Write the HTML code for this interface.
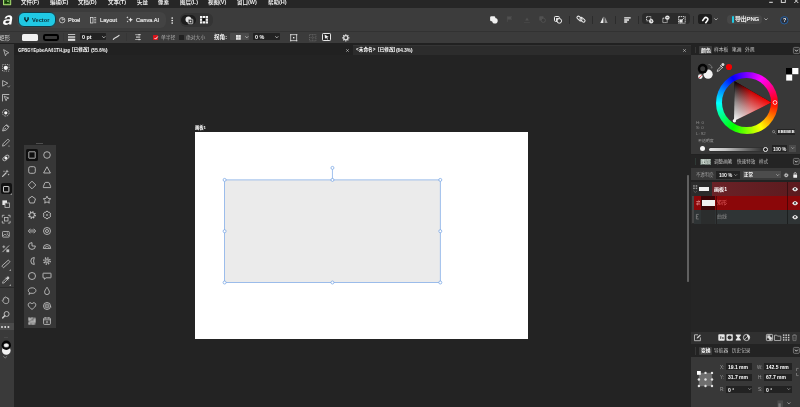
<!DOCTYPE html>
<html lang="zh-CN">
<head>
<meta charset="utf-8">
<title>Affinity</title>
<style>
*{margin:0;padding:0;box-sizing:border-box}
html,body{width:800px;height:407px;overflow:hidden;background:#232323}
body{position:relative;font-family:"Liberation Sans","Noto Sans CJK SC",sans-serif;color:#d0d0d0;font-size:5.5px;line-height:1}
.a{position:absolute}
.t{position:absolute;white-space:nowrap;line-height:1;will-change:transform}
.b{font-weight:bold;color:#fff}
svg{position:absolute;overflow:visible}
#menubar{left:0;top:0;width:800px;height:8.4px;background:#262626}
#toolbar{left:0;top:8.4px;width:800px;height:22.2px;background:#3c3c3c}
#ctx{left:0;top:30.6px;width:800px;height:12.3px;background:#3b3b3b;border-top:0.6px solid #323232}
#tabs{left:0;top:42.9px;width:800px;height:12.1px;background:#212121}
#tab2{left:353px;top:44.5px;width:337.8px;height:10.3px;background:#2c2c2c;border-top:.5px solid #353535}
#tools{left:0;top:44.2px;width:14px;height:363px;background:#3a3a3a}
#canvas{left:14px;top:55px;width:676.5px;height:352px;background:#232323}
#rp{left:690.8px;top:43.6px;width:109.2px;height:364px;background:#222}
</style>
</head>
<body>
<div class="a" id="canvas"></div>
<div class="a" id="menubar"></div>
<div class="a" id="toolbar"></div>
<div class="a" id="ctx"></div>
<div class="a" id="tabs"></div>
<div class="a" id="tab2"></div>
<div class="a" id="tools"></div>
<div class="a" id="rp"></div>
<svg style="left:2.5px;top:-3.2px" width="8.2" height="8.2" viewBox="0 0 8.2 8.2"><rect width="8.2" height="8.2" rx=".6" fill="#a9da72"/><rect x="1" y="1" width="6.200" height="6.200" fill="#2e661c"/><path d="M1.600 5.200l2-1.600v1h2v1.300h-2v1z" fill="#143008"/><circle cx="5" cy="4.300" r=".8" fill="#b8e68a"/></svg>
<div class="t" style="left:21px;top:0.3px;color:#ececec;font-weight:bold">文件(F)</div>
<div class="t" style="left:49.7px;top:0.3px;color:#ececec;font-weight:bold">编辑(E)</div>
<div class="t" style="left:78.3px;top:0.3px;color:#ececec;font-weight:bold">文档(D)</div>
<div class="t" style="left:107.7px;top:0.3px;color:#ececec;font-weight:bold">文本(T)</div>
<div class="t" style="left:136.5px;top:0.3px;color:#ececec;font-weight:bold">矢量</div>
<div class="t" style="left:158px;top:0.3px;color:#ececec;font-weight:bold">像素</div>
<div class="t" style="left:180px;top:0.3px;color:#ececec;font-weight:bold">图层(L)</div>
<div class="t" style="left:208px;top:0.3px;color:#ececec;font-weight:bold">视图(V)</div>
<div class="t" style="left:237px;top:0.3px;color:#ececec;font-weight:bold">窗口(W)</div>
<div class="t" style="left:268px;top:0.3px;color:#ececec;font-weight:bold">帮助(H)</div>
<svg style="left:768px;top:0" width="32" height="6" viewBox="0 0 32 6"><path d="M1.2 2.3h3.6" stroke="#e8e8e8" stroke-width="1"/><rect x="13.3" y="-1" width="4" height="3.4" fill="none" stroke="#e8e8e8" stroke-width=".9"/><path d="M26.3 -1l4 4M30.3 -1l-4 4" stroke="#e8e8e8" stroke-width=".9"/></svg>

<div class="a" style="left:16.5px;top:11.6px;width:149.3px;height:16.4px;border-radius:6px;background:#434343"></div>
<svg style="left:3.9px;top:14.8px" width="9" height="10.2" viewBox="0 0 9 10.2"><path transform="skewX(-9)" d="M1 3.4C1.6 1.2 3.4.3 5.2.3 7.6.3 8.8 1.6 8.8 3.6V9.6H6.6V8.6C6 9.5 4.9 10 3.6 10 1.6 10 .2 8.9 .2 7.2.2 5.2 1.8 4.3 4.4 4.3H6.5V3.7C6.5 2.6 5.9 2.1 4.9 2.1 4 2.1 3.4 2.5 3.1 3.4ZM6.5 5.8H4.7C3.3 5.8 2.5 6.2 2.5 7.1 2.5 7.8 3.1 8.3 4.1 8.3 5.5 8.3 6.5 7.4 6.5 6.2Z" fill="#fff"/></svg>
<div class="a" style="left:18.4px;top:12.4px;width:37.6px;height:14.8px;border-radius:6px;background:#20c9e4;border:.8px solid #123d47"></div>
<svg style="left:23.5px;top:16.9px" width="5" height="5.4" viewBox="0 0 5 5.4"><path d="M.9.300v2.100L2.500 4.400 4.100 2.400V.300" fill="none" stroke="#0b2b33" stroke-width="1.500" stroke-linejoin="round"/></svg>
<div class="t" style="left:31.7px;top:17.5px;font-weight:bold;color:#0d2f38;font-size:5.7px">Vector</div>
<svg style="left:58.8px;top:16.900px" width="6.4" height="6.4" viewBox="0 0 6.4 6.4"><circle cx="3.2" cy="3.2" r="2.7" fill="none" stroke="#d8d8d8" stroke-width=".8"/><path d="M3.2 3.2V.5M3.2 3.2L5.5 2" stroke="#d8d8d8" stroke-width=".7"/></svg>
<div class="t" style="left:68.2px;top:17.5px;color:#e6e6e6;font-size:5.7px;-webkit-text-stroke:.2px #e6e6e6">Pixel</div>
<svg style="left:90px;top:16.6px" width="6.4" height="6.4" viewBox="0 0 6.4 6.4"><rect x=".4" y=".4" width="2.6" height="5.6" fill="none" stroke="#d8d8d8" stroke-width=".8"/><path d="M4.2.6h2M4.2 2.3h2M4.2 4h2M4.2 5.7h2" stroke="#d8d8d8" stroke-width=".8"/></svg>
<div class="t" style="left:100px;top:17.5px;color:#e6e6e6;font-size:5.7px;-webkit-text-stroke:.2px #e6e6e6">Layout</div>
<svg style="left:126px;top:16.4px" width="7" height="7" viewBox="0 0 7 7"><path d="M4.6 1.4l.7 1.7 1.7.7-1.7.7-.7 1.7-.7-1.7-1.7-.7 1.7-.7z" fill="#e6e6e6"/><path d="M1.4.3l.35.8.8.35-.8.35-.35.8-.35-.8-.8-.35.8-.35zM1.6 4.6l.3.7.7.3-.7.3-.3.7-.3-.7-.7-.3.7-.3z" fill="#e6e6e6"/></svg>
<div class="t" style="left:135.7px;top:17.5px;color:#e6e6e6;font-size:5.7px;-webkit-text-stroke:.2px #e6e6e6">Canva AI</div>
<svg style="left:171.3px;top:16.8px" width="2.4" height="7" viewBox="0 0 2.4 7"><circle cx="1.2" cy="1" r=".85" fill="#f0f0f0"/><circle cx="1.2" cy="3.5" r=".85" fill="#f0f0f0"/><circle cx="1.2" cy="6" r=".85" fill="#f0f0f0"/></svg>
<div class="a" style="left:180px;top:12.9px;width:32.5px;height:13.9px;border-radius:6px;background:#343434"></div>
<div class="a" style="left:181.4px;top:14.7px;width:14.8px;height:10.2px;border-radius:5px;background:#1d1d1d"></div>
<svg style="left:184.8px;top:15.6px" width="8.6" height="8.6" viewBox="0 0 8.6 8.6"><circle cx="3.4" cy="3.4" r="2.9" fill="#e8e8e8"/><rect x="3.2" y="3.2" width="4.6" height="4.6" rx=".6" fill="#1d1d1d" stroke="#e8e8e8" stroke-width=".8"/><rect x="4.6" y="4.6" width="1.8" height="1.8" fill="#e8e8e8"/></svg>
<svg style="left:200px;top:15.900px" width="8" height="7.500" viewBox="0 0 8 7.500"><rect x="0.00" y="0.00" width="2.300" height="2.200" fill="#f4f4f4"/><rect x="2.85" y="0.00" width="2.300" height="2.200" fill="#f4f4f4"/><rect x="5.70" y="0.00" width="2.300" height="2.200" fill="#f4f4f4"/><rect x="0.00" y="2.65" width="2.300" height="2.200" fill="#f4f4f4"/><rect x="2.300" y="2.200" width="3.400" height="3.200" fill="#0c0c0c"/><rect x="5.70" y="2.65" width="2.300" height="2.200" fill="#f4f4f4"/><rect x="0.00" y="5.30" width="2.300" height="2.200" fill="#f4f4f4"/><rect x="2.85" y="5.30" width="2.300" height="2.200" fill="#f4f4f4"/><rect x="5.70" y="5.30" width="2.300" height="2.200" fill="#f4f4f4"/></svg>
<svg style="left:490.4px;top:15.8px" width="8" height="8" viewBox="0 0 8 8"><rect x=".1" y=".2" width="5.200" height="5" rx="1.300" fill="#f0f0f0"/><circle cx="4.900" cy="4.700" r="2.800" fill="#f0f0f0"/></svg>
<svg style="left:506.6px;top:16.2px" width="6" height="7" viewBox="0 0 6 7"><path d="M.4.300v5.600" stroke="#4f4f4f" stroke-width=".7"/><path d="M.4.400h4.800L3.900 1.900l1.300 1.500H.4z" fill="#505050"/></svg>
<svg style="left:522.6px;top:16.6px" width="8" height="6.4" viewBox="0 0 8 6.4"><path d="M4 .4l1.900 3.100H2.100z" fill="#4f4f4f"/><path d="M1 5.500h6" stroke="#4a4a4a" stroke-width=".7"/></svg>
<svg style="left:538.8px;top:15.900px" width="7" height="7" viewBox="0 0 7 7"><rect x=".3" y=".3" width="4.200" height="4.200" rx=".6" fill="#525252"/><circle cx="4.300" cy="4.300" r="2.100" fill="#3a3a3a" stroke="#525252" stroke-width=".9"/></svg>
<svg style="left:553.8px;top:16px" width="8.400" height="8" viewBox="0 0 8.400 8"><rect x=".5" y=".5" width="4.800" height="4.800" rx=".8" fill="#3a3a3a" stroke="#f0f0f0" stroke-width="1"/><rect x="2.100" y="2.100" width="3.200" height="3.200" fill="#f0f0f0"/><circle cx="5.300" cy="4.900" r="2.300" fill="#3a3a3a" stroke="#f0f0f0" stroke-width="1"/></svg>
<div class="a" style="left:569.1px;top:15.6px;width:.7px;height:8px;background:#2c2c2c"></div>
<svg style="left:576.8px;top:15.400px" width="8.200" height="8.200" viewBox="0 0 8.6 8.6"><g fill="none" stroke="#e6e6e6" stroke-width="1.1"><rect x="-.4" y="2.2" width="6" height="3" rx="1.5" transform="rotate(40 2.6 3.7)"/><rect x="2.8" y="3.6" width="6" height="3" rx="1.5" transform="rotate(40 5.8 5.1)"/></g></svg>
<div class="a" style="left:592.2px;top:15.6px;width:.7px;height:8px;background:#2c2c2c"></div>
<svg style="left:599.8px;top:15.6px" width="8" height="7.4" viewBox="0 0 8 7.4"><path d="M3.4.4V7H.3z" fill="#f0f0f0"/><path d="M4.6.4V7h3.1z" fill="#9a9a9a"/></svg>
<div class="a" style="left:614.7px;top:15.6px;width:.7px;height:8px;background:#2c2c2c"></div>
<svg style="left:623.8px;top:16.6px" width="7" height="6" viewBox="0 0 7 6"><path d="M.2.900h6.500M.2 3h4.800M.2 5h3" stroke="#f0f0f0" stroke-width="1.300"/></svg>
<div class="a" style="left:638.2px;top:15.6px;width:.7px;height:8px;background:#2c2c2c"></div>
<div class="a" style="left:642px;top:13.1px;width:48px;height:11.3px;border-radius:3.5px;background:#2b2b2b"></div>
<svg style="left:646px;top:15.5px" width="8" height="8" viewBox="0 0 8 8"><rect x=".6" y=".6" width="4.2" height="4.2" fill="none" stroke="#e8e8e8" stroke-width=".9" stroke-dasharray="1.2 .7"/><circle cx="5.2" cy="5.2" r="2.2" fill="#e8e8e8"/><path d="M5.2 4v1.4h1" stroke="#2b2b2b" stroke-width=".6" fill="none"/></svg>
<svg style="left:661.6px;top:15.2px" width="8" height="8.4" viewBox="0 0 8 8.4"><rect x=".8" y="3.2" width="4.4" height="4.4" fill="none" stroke="#e8e8e8" stroke-width=".9" stroke-dasharray="1.2 .7"/><circle cx="5.4" cy="2.6" r="2.2" fill="#e8e8e8"/><path d="M4.4 2.6h2" stroke="#2b2b2b" stroke-width=".6"/></svg>
<svg style="left:678px;top:15.5px" width="8" height="8" viewBox="0 0 8 8"><rect x=".6" y=".6" width="6.6" height="6.6" fill="none" stroke="#e8e8e8" stroke-width=".9" stroke-dasharray="1.4 .7"/><path d="M1.4 6.6V3.4h3.2v3.2z" fill="#e8e8e8"/><path d="M3 5L6.2 1.8" stroke="#e8e8e8" stroke-width=".7"/></svg>
<div class="a" style="left:692.9px;top:15.6px;width:.7px;height:8px;background:#2c2c2c"></div>
<div class="a" style="left:698.2px;top:14.4px;width:13.8px;height:10px;border-radius:2.6px;background:#1d1d1d"></div>
<svg style="left:701.4px;top:15.6px" width="7.6" height="7.6" viewBox="0 0 7.6 7.6"><path d="M1.2 4.6L3.6 2.2a1.9 1.9 0 0 1 2.7 2.7L3.9 7.3" fill="none" stroke="#fff" stroke-width="1.5" transform="rotate(-8 3.8 3.8)"/></svg>
<svg style="left:714px;top:18.4px" width="4" height="2.6" viewBox="0 0 4 2.6"><path d="M.4.4L2 2 3.6.4" fill="none" stroke="#bdbdbd" stroke-width=".8"/></svg>
<div class="a" style="left:727px;top:14.6px;width:35.2px;height:9.9px;border-radius:4px;background:#474747"></div>
<div class="a" style="left:732px;top:16px;width:2px;height:7.2px;border-radius:1px;background:#1fc9e3"></div>
<div class="t" style="left:735.4px;top:16.6px;color:#f4f4f4;font-size:5.9px;letter-spacing:-.1px;-webkit-text-stroke:.2px #f4f4f4">导出PNG</div>
<svg style="left:763.8px;top:18.4px" width="4" height="2.6" viewBox="0 0 4 2.6"><path d="M.4.4L2 2 3.6.4" fill="none" stroke="#bdbdbd" stroke-width=".8"/></svg>
<svg style="left:780.4px;top:15.6px" width="8.6" height="8.6" viewBox="0 0 8.6 8.6"><circle cx="4.3" cy="4.3" r="3.7" fill="#2a2f3a" stroke="#2268b8" stroke-width=".8"/></svg>
<div class="t b" style="left:783.100px;top:17.500px;font-size:5.400px;color:#f0f0f0">?</div>

<div class="t" style="left:-1px;top:35.6px;color:#cfcfcf;font-size:5.6px">矩形</div>
<div class="a" style="left:21.5px;top:33.5px;width:16.3px;height:7.6px;border-radius:1.6px;background:#f1f1f1"></div>
<div class="a" style="left:43px;top:33.6px;width:15.8px;height:7.3px;border-radius:2.400px;background:#3a3a3a;border:2px solid #000"></div>
<div class="a" style="left:63.3px;top:33.4px;width:.6px;height:7.6px;background:#363636"></div>
<svg style="left:68px;top:34.1px" width="7.2" height="7" viewBox="0 0 7.2 7"><path d="M0 .5h7.2" stroke="#cfcfcf" stroke-width=".9"/><path d="M0 3h7.2" stroke="#d6d6d6" stroke-width="1.5"/><path d="M0 5.8h7.2" stroke="#dedede" stroke-width="2.2"/></svg>
<div class="a" style="left:80px;top:33.4px;width:26.4px;height:7.1px;border-radius:.8px;background:#222"></div>
<div class="t b" style="left:82px;top:34.9px;font-size:5.4px">0 pt</div>
<svg style="left:101.8px;top:35.9px" width="3.6" height="2.4" viewBox="0 0 3.6 2.4"><path d="M.3.3L1.8 1.9 3.3.3" fill="none" stroke="#c8c8c8" stroke-width=".8"/></svg>
<svg style="left:112.8px;top:34.6px" width="6.4" height="4.8" viewBox="0 0 6.4 4.8"><path d="M.3 4.4C1.6 2.4 3.4 2.8 6.1.4" fill="none" stroke="#e0e0e0" stroke-width="1.1" stroke-linecap="round"/></svg>
<div class="a" style="left:126.2px;top:33.4px;width:.6px;height:7.6px;background:#363636"></div>
<svg style="left:135px;top:34px" width="6.2" height="6.2" viewBox="0 0 6.2 6.2"><path d="M.2.7h5.8M.2 5.5h5.8" stroke="#d8d8d8" stroke-width=".7"/><path d="M1 3.1h4.2" stroke="#d8d8d8" stroke-width="1.1"/><rect x="3.4" y="0" width="1.4" height="1.4" fill="#d8d8d8"/><rect x="3.4" y="4.8" width="1.4" height="1.4" fill="#d8d8d8"/></svg>
<div class="a" style="left:153.4px;top:35.2px;width:5.1px;height:4.7px;border-radius:.7px;background:#d8141c"></div>
<svg style="left:153.9px;top:35.7px" width="4.2" height="3.8" viewBox="0 0 4.2 3.8"><path d="M.5 2L1.6 3.1 3.8.5" fill="none" stroke="#fff" stroke-width=".9"/></svg>
<div class="t" style="left:160.7px;top:36.4px;color:#b0b0b0;font-size:4.8px">单半径</div>
<div class="a" style="left:179.3px;top:35.2px;width:4.7px;height:4.7px;border-radius:.5px;background:#212121"></div>
<div class="t" style="left:186px;top:36.4px;color:#b0b0b0;font-size:4.8px">绝对大小</div>
<div class="t b" style="left:213.6px;top:35.4px;font-size:5.6px">拐角:</div>
<div class="a" style="left:230px;top:33.4px;width:19.4px;height:7.1px;border-radius:.8px;background:#4b4b4b"></div>
<svg style="left:235.6px;top:34.6px" width="4.8" height="4.8" viewBox="0 0 4.8 4.8"><rect width="4.8" height="4.8" fill="#e2e2e2"/><path d="M0 2.4h4.8M2.4 0v4.8" stroke="#9c9c9c" stroke-width=".5"/></svg>
<svg style="left:245px;top:35.9px" width="3.6" height="2.4" viewBox="0 0 3.6 2.4"><path d="M.3.3L1.8 1.9 3.3.3" fill="none" stroke="#c0c0c0" stroke-width=".8"/></svg>
<div class="a" style="left:252.5px;top:33.4px;width:27.5px;height:7.1px;border-radius:.8px;background:#222"></div>
<div class="t b" style="left:255px;top:34.9px;font-size:5.4px">0 %</div>
<svg style="left:274.6px;top:35.9px" width="3.6" height="2.4" viewBox="0 0 3.6 2.4"><path d="M.3.3L1.8 1.9 3.3.3" fill="none" stroke="#c8c8c8" stroke-width=".8"/></svg>
<svg style="left:290px;top:33.8px" width="7.4" height="7.4" viewBox="0 0 7.4 7.4"><rect x=".7" y=".7" width="6" height="6" fill="none" stroke="#d8d8d8" stroke-width=".8"/><path d="M0 .7h1.400M.7 0v1.400M6 .7h1.400M6.700 0v1.400M0 6.700h1.400M.7 6v1.400M6 6.700h1.400M6.700 6v1.400" stroke="#d8d8d8" stroke-width=".6"/><rect x="3" y="3" width="1.400" height="1.400" fill="#e8e8e8"/></svg>
<svg style="left:308.8px;top:33.6px" width="7.4" height="7.4" viewBox="0 0 7.4 7.4"><rect x=".5" y=".5" width="6.4" height="6.4" fill="none" stroke="#6a6a6a" stroke-width=".8" stroke-dasharray="1.2 .8"/><path d="M3.700 .5v6.400M.5 3.700h6.400" stroke="#6a6a6a" stroke-width=".7" stroke-dasharray="1 .7"/></svg>
<div class="a" style="left:321.8px;top:33px;width:9.3px;height:8.100px;border-radius:1.2px;background:#262626;border:.8px solid #e6e6e6"></div>
<svg style="left:323.6px;top:34.4px" width="5.4" height="5.6" viewBox="0 0 5.400 5.600"><path d="M.6.400L4.800 3 3 3.400 4 5.200 3.200 5.500 2.300 3.700 1 4.800z" fill="#f0f0f0"/></svg>
<svg style="left:341.6px;top:33.6px" width="7.6" height="7.6" viewBox="0 0 7.6 7.6"><circle cx="3.800" cy="3.800" r="2.100" fill="none" stroke="#dcdcdc" stroke-width="1.300"/><g stroke="#dcdcdc" stroke-width="1.200"><path d="M3.800 .2v1.200M3.800 6.200v1.200M.2 3.800h1.200M6.200 3.800h1.200M1.250 1.250l.85.85M5.500 5.500l.85.85M6.350 1.250l-.85.85M2.100 5.500l-.85.85"/></g></svg>

<div class="t b" style="left:18.4px;top:47.7px;font-size:5.6px;transform-origin:0 0;transform:scaleX(.8)">GP8GYEpboAA61TH.jpg</div><div class="t b" style="left:72.4px;top:48.2px;font-size:4.7px">[已修改]</div><div class="t b" style="left:91.2px;top:47.7px;font-size:5.6px;transform-origin:0 0;transform:scaleX(.835)">(55.6%)</div>
<svg style="left:345.6px;top:48.6px" width="3" height="3" viewBox="0 0 3 3"><path d="M.2.200l2.600 2.600M2.800.200L.2 2.800" stroke="#d0d0d0" stroke-width=".6"/></svg>
<div class="t b" style="left:356.3px;top:48.2px;font-size:4.7px">&lt;未命名&gt;</div><div class="t b" style="left:378px;top:48.2px;font-size:4.7px">[已修改]</div><div class="t b" style="left:396.3px;top:47.7px;font-size:5.6px;transform-origin:0 0;transform:scaleX(.835)">(84.3%)</div>
<svg style="left:683px;top:48.6px" width="3" height="3" viewBox="0 0 3 3"><path d="M.2.200l2.600 2.600M2.800.200L.2 2.800" stroke="#d0d0d0" stroke-width=".6"/></svg>

<div class="a" style="left:1.2px;top:183px;width:10.4px;height:11px;border-radius:2px;background:#121212"></div>
<div class="a" style="left:0;top:323.4px;width:14px;height:7px;background:#4b4b4b"></div>
<div class="a" style="left:0;top:287.2px;width:14px;height:.6px;background:#2c2c2c"></div>
<svg style="left:2.8px;top:49.100px" width="6.400" height="7.400" viewBox="0 0 6.400 7.400"><path d="M.6.600L5.800 3.800 3.600 4.500 2.500 6.800z" fill="none" stroke="#c4c4c4" stroke-width=".8" stroke-linejoin="round"/></svg>
<svg style="left:2.2px;top:64px" width="7.600" height="7.600" viewBox="0 0 7.600 7.600"><circle cx="3.800" cy="3.800" r="2.100" fill="#f4f4f4"/><rect x=".5" y=".5" width="6.600" height="6.600" fill="none" stroke="#c4c4c4" stroke-width=".8" stroke-dasharray="1.100 1.100"/></svg>
<svg style="left:2.2px;top:79.6px" width="8" height="8" viewBox="0 0 8 8"><path d="M.6.6L5.800 3.200.6 6.200z" fill="none" stroke="#c4c4c4" stroke-width=".8" stroke-linejoin="round"/><path d="M5.800 6.400l.8.800 1.200-1.500" fill="none" stroke="#c4c4c4" stroke-width=".7"/></svg>
<svg style="left:2.2px;top:94.4px" width="7.6" height="7.6" viewBox="0 0 7.6 7.6"><path d="M.5 7.400V.5h6.800" fill="none" stroke="#c4c4c4" stroke-width=".9"/><path d="M2.200 2.200l4.600 1.900-2 .7-.7 2z" fill="none" stroke="#c4c4c4" stroke-width=".8" stroke-linejoin="round"/></svg>
<svg style="left:2.1px;top:109.2px" width="7.6" height="7.6" viewBox="0 0 7.6 7.6"><circle cx="3.8" cy="3.8" r="3.300" fill="none" stroke="#c4c4c4" stroke-width=".8" stroke-dasharray="1.600 .9"/><circle cx="3.8" cy="3.8" r="1.600" fill="#f4f4f4"/></svg>
<svg style="left:2.2px;top:124.2px" width="7.6" height="7.6" viewBox="0 0 7.6 7.6"><path d="M.6 7L1.400 3.600 4 1l2.600 2.600L4 6.200z" fill="none" stroke="#c4c4c4" stroke-width=".8" stroke-linejoin="round"/><path d="M.6 7l2.400-2.400" stroke="#c4c4c4" stroke-width=".6"/><circle cx="3.300" cy="4.300" r=".6" fill="#c4c4c4"/><path d="M4.600 .4l2.600 2.600" stroke="#c4c4c4" stroke-width=".9"/></svg>
<svg style="left:1.8px;top:138.8px" width="7.6" height="7.6" viewBox="0 0 7.6 7.6"><path d="M.5 7.100l.6-2.300L5.300.6a.9.900 0 0 1 1.300 0l.4.400a.9.900 0 0 1 0 1.300L2.800 6.500z" fill="none" stroke="#c4c4c4" stroke-width=".8" stroke-linejoin="round"/><path d="M7 6.400l.5.900M6.300 7.300h1.200" stroke="#c4c4c4" stroke-width=".5"/></svg>
<svg style="left:1.9px;top:154.1px" width="7.8" height="7.8" viewBox="0 0 7.8 7.8"><ellipse cx="3.900" cy="3.900" rx="3.700" ry="1.900" transform="rotate(-40 3.900 3.900)" fill="none" stroke="#c4c4c4" stroke-width=".8"/><circle cx="3.900" cy="3.900" r="1.500" fill="#f4f4f4"/></svg>
<svg style="left:1.8px;top:169.2px" width="8" height="8" viewBox="0 0 8 8"><path d="M.6 7.400L4 4" stroke="#c4c4c4" stroke-width="1.300" stroke-linecap="round"/><path d="M5 .4l.5 1.400 1.400.5-1.400.5L5 4.200l-.5-1.400-1.400-.5 1.400-.5zM2 1.200l.3.700.7.300-.7.300-.3.700-.3-.7-.7-.300.7-.300zM6.600 4.600l.3.700.7.300-.7.300-.3.700-.3-.7-.7-.300.7-.300z" fill="#c4c4c4"/></svg>
<svg style="left:3.2px;top:185.6px" width="6.4" height="6.4" viewBox="0 0 6.4 6.4"><rect x=".5" y=".5" width="5.400" height="5.400" rx=".4" fill="none" stroke="#e0e0e0" stroke-width=".9"/></svg>
<svg style="left:10.0px;top:192.6px" width="2" height="2" viewBox="0 0 2 2"><path d="M2 0v2H0z" fill="#8a8a8a"/></svg>
<svg style="left:2.0px;top:200.0px" width="8" height="8" viewBox="0 0 8 8"><rect x=".4" y=".4" width="4.600" height="4.600" fill="#e8e8e8"/><rect x="3" y="3" width="4.400" height="4.400" fill="#3a3a3a" stroke="#c4c4c4" stroke-width=".8"/></svg>
<svg style="left:1.8px;top:214.8px" width="8.4" height="8.4" viewBox="0 0 8.4 8.4"><rect x="2.400" y="2.400" width="3.600" height="3.600" fill="none" stroke="#c4c4c4" stroke-width=".8"/><path d="M.3.300h2.200M.3.300v2.200M8.100.300H5.900M8.100.300v2.200M.3 8.100h2.200M.3 8.100V5.900M8.100 8.100H5.900M8.100 8.100V5.900" stroke="#c4c4c4" stroke-width=".8" fill="none"/></svg>
<svg style="left:2.1px;top:230.7px" width="7.8" height="6.6" viewBox="0 0 7.8 6.6"><rect x=".5" y=".5" width="6.800" height="5.600" rx=".8" fill="none" stroke="#c4c4c4" stroke-width=".8"/><path d="M1 5l1.900-2 1.400 1.400 1-1L7 5" fill="none" stroke="#c4c4c4" stroke-width=".7"/><circle cx="5.300" cy="2" r=".6" fill="#c4c4c4"/></svg>
<svg style="left:2.2px;top:245.2px" width="7.6" height="7.6" viewBox="0 0 7.6 7.6"><path d="M.5 7.100L7.100 .5" stroke="#c4c4c4" stroke-width=".9"/><path d="M.4 1.800h2.800M1.800.4v2.800" stroke="#c4c4c4" stroke-width=".8"/><rect x="4.400" y="4.400" width="2.800" height="2.800" fill="#c4c4c4"/></svg>
<svg style="left:1.7px;top:259.7px" width="7.8" height="7.8" viewBox="0 0 7.8 7.8"><rect x="-.6" y="2.700" width="9" height="2.400" rx=".5" transform="rotate(-42 3.900 3.900)" fill="none" stroke="#c4c4c4" stroke-width=".8"/></svg>
<svg style="left:9.4px;top:268.6px" width="2" height="2" viewBox="0 0 2 2"><path d="M2 0v2H0z" fill="#9a9a9a"/></svg>
<svg style="left:1.9px;top:275.5px" width="7.8" height="7.8" viewBox="0 0 7.8 7.8"><path d="M.6 7.200l.3-1.500L4.200 2.400l1.200 1.200L2.100 6.900z" fill="none" stroke="#c4c4c4" stroke-width=".8" stroke-linejoin="round"/><path d="M3.600 1.800l2.400 2.400" stroke="#c4c4c4" stroke-width="1"/><circle cx="5.900" cy="1.900" r="1.400" fill="#c4c4c4"/></svg>
<svg style="left:9.4px;top:284.0px" width="2" height="2" viewBox="0 0 2 2"><path d="M2 0v2H0z" fill="#9a9a9a"/></svg>
<svg style="left:2.3px;top:295.8px" width="7.4" height="8" viewBox="0 0 7.4 8"><path d="M1.600 4.200V2.200a.7.700 0 0 1 1.300 0V1.300a.7.700 0 0 1 1.300 0v.5a.7.700 0 0 1 1.300.2v.8a.6.600 0 0 1 1.200.2V5.200c0 1.500-1 2.400-2.500 2.400S1.800 7 1.200 6L.4 4.600c-.3-.6.500-1 .9-.5z" fill="none" stroke="#c4c4c4" stroke-width=".8" stroke-linejoin="round"/></svg>
<svg style="left:2.4px;top:310.8px" width="7.6" height="7.6" viewBox="0 0 7.6 7.6"><circle cx="4.600" cy="3" r="2.500" fill="none" stroke="#c4c4c4" stroke-width=".9"/><path d="M2.800 4.800L.7 6.900" stroke="#c4c4c4" stroke-width="1.500" stroke-linecap="round"/></svg>
<svg style="left:1.4px;top:326.0px" width="8.4" height="2" viewBox="0 0 8.4 2"><rect x=".2" y=".2" width="1.600" height="1.600" fill="#f4f4f4"/><rect x="3.400" y=".2" width="1.600" height="1.600" fill="#f4f4f4"/><rect x="6.600" y=".2" width="1.600" height="1.600" fill="#f4f4f4"/></svg>
<div class="a" style="left:4px;top:336.500px;width:3.600px;height:.6px;background:#484848"></div>
<svg style="left:0.6px;top:339.600px" width="11" height="17" viewBox="0 0 11 17"><defs><radialGradient id="tg" cx=".5" cy=".45" r=".6"><stop offset="0" stop-color="#fff"/><stop offset=".55" stop-color="#e0e0e0"/><stop offset="1" stop-color="#666"/></radialGradient></defs><circle cx="5.300" cy="10.400" r="4.300" fill="#f2f2f2"/><circle cx="5.300" cy="5.200" r="4.700" fill="#050505"/><ellipse cx="5.300" cy="5.400" rx="2.700" ry="2.200" fill="url(#tg)"/></svg>
<svg style="left:3.4px;top:356.4px" width="4.4" height="2.4" viewBox="0 0 4.4 2.4"><path d="M.3.300L2.200 2 4.100.300" fill="none" stroke="#9a9a9a" stroke-width=".7"/></svg>

<div class="a" style="left:23.7px;top:145px;width:32.3px;height:182.500px;background:#373737"></div>
<div class="a" style="left:36.4px;top:142.700px;width:7px;height:.7px;background:#4e4e4e"></div>
<div class="a" style="left:26.2px;top:149.100px;width:11.8px;height:11.5px;border-radius:1.600px;background:#0f0f0f"></div>
<svg style="left:28.3px;top:150.8px" width="8" height="8" viewBox="-4 -4 8 8"><g fill="none" stroke="#cfcfcf" stroke-width=".8" stroke-linejoin="round"><rect x="-3.200" y="-3.200" width="6.400" height="6.400" rx=".3"/></g></svg>
<svg style="left:43.2px;top:150.8px" width="8" height="8" viewBox="-4 -4 8 8"><g fill="none" stroke="#cfcfcf" stroke-width=".8" stroke-linejoin="round"><circle r="3.300"/></g></svg>
<svg style="left:28.3px;top:166.0px" width="8" height="8" viewBox="-4 -4 8 8"><g fill="none" stroke="#cfcfcf" stroke-width=".8" stroke-linejoin="round"><rect x="-3.300" y="-3.300" width="6.600" height="6.600" rx="1.600"/></g></svg>
<svg style="left:43.2px;top:166.4px" width="8" height="8" viewBox="-4 -4 8 8"><g fill="none" stroke="#cfcfcf" stroke-width=".8" stroke-linejoin="round"><path d="M0 -3.200L3.400 3H-3.400z"/></g></svg>
<svg style="left:28.3px;top:181.0px" width="8" height="8" viewBox="-4 -4 8 8"><g fill="none" stroke="#cfcfcf" stroke-width=".8" stroke-linejoin="round"><path d="M0 -3.800L3.800 0 0 3.800-3.800 0z"/></g></svg>
<svg style="left:43.4px;top:181.0px" width="8" height="8" viewBox="-4 -4 8 8"><g fill="none" stroke="#cfcfcf" stroke-width=".8" stroke-linejoin="round"><path d="M-3.600 2.600v-1.200l1.400-3.400a1 1 0 0 1 .9-.6h2.600a1 1 0 0 1 .9.600l1.400 3.400v1.200z"/></g></svg>
<svg style="left:28.3px;top:196.2px" width="8" height="8" viewBox="-4 -4 8 8"><g fill="none" stroke="#cfcfcf" stroke-width=".8" stroke-linejoin="round"><path d="M0.00 -3.70L3.52 -1.14L2.17 2.99L-2.17 2.99L-3.52 -1.14z"/></g></svg>
<svg style="left:43.2px;top:196.2px" width="8" height="8" viewBox="-4 -4 8 8"><g fill="none" stroke="#cfcfcf" stroke-width=".8" stroke-linejoin="round"><path d="M0.00 -3.90L1.12 -1.54L3.71 -1.21L1.81 0.59L2.29 3.16L0.00 1.90L-2.29 3.16L-1.81 0.59L-3.71 -1.21L-1.12 -1.54z"/></g></svg>
<svg style="left:28.3px;top:211.4px" width="8" height="8" viewBox="-4 -4 8 8"><g fill="none" stroke="#cfcfcf" stroke-width=".8" stroke-linejoin="round"><circle r="3.200" stroke-width="1.300" stroke-dasharray="1.250 1.260"/><circle r="2.400" stroke-width=".9"/></g></svg>
<svg style="left:43.2px;top:211.4px" width="8" height="8" viewBox="-4 -4 8 8"><g fill="none" stroke="#cfcfcf" stroke-width=".8" stroke-linejoin="round"><path d="M-1.50 -2.60A1.55 1.55 0 0 1 1.50 -2.60A1.55 1.55 0 0 1 3.00 0.00A1.55 1.55 0 0 1 1.50 2.60A1.55 1.55 0 0 1 -1.50 2.60A1.55 1.55 0 0 1 -3.00 0.00A1.55 1.55 0 0 1 -1.50 -2.60z" stroke-width=".9"/><path d="M-1.100 0h2.200M0 -1.100v2.200" stroke-width=".6"/></g></svg>
<svg style="left:28.3px;top:226.5px" width="8" height="8" viewBox="-4 -4 8 8"><g fill="none" stroke="#cfcfcf" stroke-width=".8" stroke-linejoin="round"><path d="M-1.700 -2.100L-3.900 0l2.200 2.100M1.700 -2.100L3.900 0 1.700 2.100M-2.700 -.9h5.400M-2.700 .9h5.400" stroke-width=".7" stroke-linejoin="miter"/></g></svg>
<svg style="left:43.2px;top:226.5px" width="8" height="8" viewBox="-4 -4 8 8"><g fill="none" stroke="#cfcfcf" stroke-width=".8" stroke-linejoin="round"><circle r="3.500"/><circle r="1.500"/></g></svg>
<svg style="left:28.3px;top:241.5px" width="8" height="8" viewBox="-4 -4 8 8"><g fill="none" stroke="#cfcfcf" stroke-width=".8" stroke-linejoin="round"><path d="M0 0h3.400A3.400 3.400 0 1 1 0 -3.400z"/></g></svg>
<svg style="left:43.2px;top:241.8px" width="8" height="8" viewBox="-4 -4 8 8"><g fill="none" stroke="#cfcfcf" stroke-width=".8" stroke-linejoin="round"><path d="M-3.700 2.400a3.700 3.900 0 0 1 7.400 0z"/><path d="M-2 2.400a2 2.100 0 0 1 4 0" stroke-width=".5"/></g></svg>
<svg style="left:27.7px;top:256.5px" width="8" height="8" viewBox="-4 -4 8 8"><g fill="none" stroke="#cfcfcf" stroke-width=".8" stroke-linejoin="round"><path d="M2.300 -3.500A3.500 3.500 0 0 0 2.300 3.500A9 9 0 0 1 2.300 -3.500z"/></g></svg>
<svg style="left:43.2px;top:256.5px" width="8" height="8" viewBox="-4 -4 8 8"><g fill="none" stroke="#cfcfcf" stroke-width=".8" stroke-linejoin="round"><circle r="3.200" stroke-width="1.200" stroke-dasharray="1.250 1.260"/><circle r="1.900" stroke-width=".8"/><circle r=".5" stroke-width=".6"/></g></svg>
<svg style="left:28.3px;top:271.7px" width="8" height="8" viewBox="-4 -4 8 8"><g fill="none" stroke="#cfcfcf" stroke-width=".8" stroke-linejoin="round"><circle r="3.500"/></g></svg>
<svg style="left:43.2px;top:271.7px" width="8" height="8" viewBox="-4 -4 8 8"><g fill="none" stroke="#cfcfcf" stroke-width=".8" stroke-linejoin="round"><path d="M-3.600 -2.800h7.200a.4.400 0 0 1 .4.400v3.800a.4.400 0 0 1-.4.400h-4.600l-1.600 1.500v-1.500h-1a.4.400 0 0 1-.4-.4v-3.800a.4.400 0 0 1 .4-.4z"/></g></svg>
<svg style="left:28.3px;top:286.7px" width="8" height="8" viewBox="-4 -4 8 8"><g fill="none" stroke="#cfcfcf" stroke-width=".8" stroke-linejoin="round"><path d="M.2 -3.200c2.100 0 3.700 1.200 3.700 2.800S2.300 2.400.2 2.400c-.5 0-1-.1-1.400-.2l-1.900 1.200.7-1.800C-3.300 1.100-3.700.4-3.700-.4c0-1.600 1.700-2.800 3.900-2.800z"/></g></svg>
<svg style="left:43.2px;top:286.7px" width="8" height="8" viewBox="-4 -4 8 8"><g fill="none" stroke="#cfcfcf" stroke-width=".8" stroke-linejoin="round"><path d="M0 -3.700C1.200 -1.800 2.400-.3 2.400 1.200a2.400 2.400 0 0 1-4.800 0C-2.400-.3-1.200-1.800 0-3.700z"/></g></svg>
<svg style="left:28.3px;top:301.7px" width="8" height="8" viewBox="-4 -4 8 8"><g fill="none" stroke="#cfcfcf" stroke-width=".8" stroke-linejoin="round"><path d="M0 3.400C-2.400 1.600-3.800.3-3.800-1.200a2 2 0 0 1 3.800-.900 2 2 0 0 1 3.800.9C3.800.3 2.400 1.600 0 3.400z"/></g></svg>
<svg style="left:43.2px;top:301.7px" width="8" height="8" viewBox="-4 -4 8 8"><g fill="none" stroke="#cfcfcf" stroke-width=".8" stroke-linejoin="round"><circle r="3.500"/><circle r="1.900" stroke-width=".7"/><circle r=".5" stroke-width=".6"/><path d="M3.500 0l.5 1.500" stroke-width=".6"/></g></svg>
<svg style="left:28.3px;top:317.0px" width="8" height="8" viewBox="-4 -4 8 8"><g fill="none" stroke="#cfcfcf" stroke-width=".8" stroke-linejoin="round"><rect x="-3.600" y="-3.600" width="7.200" height="7.200" fill="#777" stroke="none"/><rect x="-3.5" y="-3.5" width="1" height="1" fill="#cfcfcf" stroke="none"/><rect x="-3.5" y="-2.5" width="1" height="1" fill="#cfcfcf" stroke="none"/><rect x="-3.5" y="-1.5" width="1" height="1" fill="#cfcfcf" stroke="none"/><rect x="-3.5" y="1.5" width="1" height="1" fill="#cfcfcf" stroke="none"/><rect x="-3.5" y="2.5" width="1" height="1" fill="#cfcfcf" stroke="none"/><rect x="-2.5" y="-2.5" width="1" height="1" fill="#cfcfcf" stroke="none"/><rect x="-2.5" y="-1.5" width="1" height="1" fill="#cfcfcf" stroke="none"/><rect x="-2.5" y="0.5" width="1" height="1" fill="#cfcfcf" stroke="none"/><rect x="-2.5" y="2.5" width="1" height="1" fill="#cfcfcf" stroke="none"/><rect x="-1.5" y="-2.5" width="1" height="1" fill="#cfcfcf" stroke="none"/><rect x="-1.5" y="0.5" width="1" height="1" fill="#cfcfcf" stroke="none"/><rect x="-0.5" y="-3.5" width="1" height="1" fill="#cfcfcf" stroke="none"/><rect x="-0.5" y="-0.5" width="1" height="1" fill="#cfcfcf" stroke="none"/><rect x="-0.5" y="0.5" width="1" height="1" fill="#cfcfcf" stroke="none"/><rect x="-0.5" y="2.5" width="1" height="1" fill="#cfcfcf" stroke="none"/><rect x="0.5" y="0.5" width="1" height="1" fill="#cfcfcf" stroke="none"/><rect x="0.5" y="2.5" width="1" height="1" fill="#cfcfcf" stroke="none"/><rect x="1.5" y="-1.5" width="1" height="1" fill="#cfcfcf" stroke="none"/><rect x="1.5" y="-0.5" width="1" height="1" fill="#cfcfcf" stroke="none"/><rect x="1.5" y="0.5" width="1" height="1" fill="#cfcfcf" stroke="none"/><rect x="1.5" y="2.5" width="1" height="1" fill="#cfcfcf" stroke="none"/><rect x="2.5" y="-2.5" width="1" height="1" fill="#cfcfcf" stroke="none"/><rect x="2.5" y="-1.5" width="1" height="1" fill="#cfcfcf" stroke="none"/><rect x="2.5" y="-0.5" width="1" height="1" fill="#cfcfcf" stroke="none"/><rect x="2.5" y="0.5" width="1" height="1" fill="#cfcfcf" stroke="none"/></g></svg>
<svg style="left:43.2px;top:317.0px" width="8" height="8" viewBox="-4 -4 8 8"><g fill="none" stroke="#cfcfcf" stroke-width=".8" stroke-linejoin="round"><rect x="-3.400" y="-3" width="6.800" height="6.400" rx=".8"/><path d="M-3.400 -1.200h6.800M-1.800 -3.800v1.400M1.800 -3.800v1.400" stroke-width=".7"/><rect x="-.7" y=".3" width="1.400" height="1.600" stroke-width=".5"/></g></svg>

<div class="t b" style="left:195px;top:125.800px;font-size:4.3px">画板1</div>
<div class="a" style="left:194.800px;top:131.700px;width:333px;height:207.200px;background:#fff"></div>
<svg style="left:220px;top:164px" width="226" height="124" viewBox="220 164 226 124"><rect x="224.600" y="179.900" width="215.700" height="102.600" fill="#ebebeb" stroke="#86afe8" stroke-width=".8"/><path d="M332.450 168v11.900" stroke="#7aa7e6" stroke-width=".7"/><g fill="#fff" stroke="#6f9fe2" stroke-width=".7"><circle cx="224.600" cy="179.900" r="1.500"/><circle cx="332.450" cy="179.900" r="1.500"/><circle cx="440.300" cy="179.900" r="1.500"/><circle cx="224.600" cy="231.200" r="1.500"/><circle cx="440.300" cy="231.200" r="1.500"/><circle cx="224.600" cy="282.500" r="1.500"/><circle cx="332.450" cy="282.500" r="1.500"/><circle cx="440.300" cy="282.500" r="1.500"/><circle cx="332.450" cy="167.900" r="1.500"/></g></svg>
<div class="a" style="left:687.100px;top:174.600px;width:1.700px;height:107.500px;background:#606060;border-radius:.7px"></div>

<div class="a" style="left:690.800px;top:55px;width:109.200px;height:98.700px;background:#383838"></div>
<div class="a" style="left:694.700px;top:46.500px;width:.7px;height:6.500px;background:#363636"></div>
<div class="a" style="left:699px;top:46px;width:13.200px;height:8.200px;border-radius:.8px;background:#3c3c3c"></div>
<div class="t b" style="left:700.600px;top:47.900px;font-size:5px">颜色</div>
<div class="t" style="left:713.800px;top:47.900px;font-size:4.800px;color:#c4c4c4">样本板</div>
<div class="t" style="left:731.800px;top:47.900px;font-size:4.800px;color:#c4c4c4">笔画</div>
<div class="t" style="left:745px;top:47.900px;font-size:4.800px;color:#c4c4c4">外观</div>
<svg style="left:792.600px;top:46.600px" width="7" height="7" viewBox="0 0 7 7"><rect x=".4" y=".4" width="6.200" height="6.200" rx="1.200" fill="#2c2c2c" stroke="#8c8c8c" stroke-width=".7"/><path d="M2 2.700l1.500 1.600L5 2.700" fill="none" stroke="#f0f0f0" stroke-width=".8"/></svg>
<svg style="left:696px;top:62px" width="40" height="19" viewBox="696 62 40 19">
<circle cx="708.100" cy="74.200" r="4.600" fill="#f2f2f2"/>
<circle cx="702.700" cy="68.700" r="4.900" fill="#050505"/><circle cx="702.700" cy="68.700" r="2.500" fill="#3a3a3a"/>
<path d="M708.500 64.500a3 3 0 0 1 3.200 3.300" fill="none" stroke="#9a9a9a" stroke-width=".6"/><path d="M711 67.400l.7.800.8-.8" fill="none" stroke="#9a9a9a" stroke-width=".6"/>
<circle cx="700.300" cy="76.600" r="2.300" fill="#f4f4f4"/><path d="M698.800 78.100l3-3" stroke="#e0202a" stroke-width=".8"/>
<path d="M717.200 71.400l.4-1.600 3.600-3.600 1.200 1.200-3.600 3.600z" fill="none" stroke="#dcdcdc" stroke-width=".8" stroke-linejoin="round"/><path d="M720.200 65.300l2.600 2.600" stroke="#dcdcdc" stroke-width="1"/><circle cx="722.900" cy="64.600" r="1.500" fill="#dcdcdc"/>
<circle cx="729" cy="67" r="3.100" fill="#f40000"/>
</svg>
<svg style="left:785.600px;top:68px" width="13" height="13" viewBox="0 0 13 13"><rect width="6.200" height="6.200" fill="#000"/><rect x="6.200" width="6.200" height="6.200" fill="#fff"/><rect x=".2" y="6.600" width="6" height="6" fill="#fff"/></svg>
<div class="a" style="left:715.500px;top:71.600px;width:62.600px;height:62.600px;border-radius:50%;background:conic-gradient(from 90deg,#f00,#ff0,#0f0,#0ff,#00f,#f0f,#f00)"></div>
<div class="a" style="left:722.400px;top:78.300px;width:48.800px;height:48.800px;border-radius:50%;background:#383838"></div>
<svg style="left:730px;top:78px;isolation:isolate" width="50" height="48" viewBox="730 78 50 48"><defs><linearGradient id="g1" gradientUnits="userSpaceOnUse" x1="734.300" y1="102" x2="771.400" y2="102"><stop offset="0" stop-color="#000"/><stop offset=".45" stop-color="#c40000"/><stop offset="1" stop-color="#ff0000"/></linearGradient><linearGradient id="g2" gradientUnits="userSpaceOnUse" x1="751.300" y1="90.900" x2="734" y2="121"><stop offset="0" stop-color="#000"/><stop offset=".5" stop-color="#8c8c8c"/><stop offset="1" stop-color="#fff"/></linearGradient></defs>
<path d="M734.600 81.300L771.400 102.500 734 121z" fill="url(#g1)"/><path d="M734.600 81.300L771.400 102.500 734 121z" fill="url(#g2)" style="mix-blend-mode:screen"/>
<circle cx="775" cy="102.500" r="1.900" fill="none" stroke="#fff" stroke-width=".8"/><circle cx="734.400" cy="120.700" r="1.700" fill="#f4f4f4"/></svg>
<div class="t" style="left:695.500px;top:120.900px;font-size:4.300px;color:#8e8e8e">H: 0</div>
<div class="t" style="left:695.500px;top:126.200px;font-size:4.300px;color:#8e8e8e">S: 0</div>
<div class="t" style="left:695.500px;top:131.500px;font-size:4.300px;color:#8e8e8e">L: 92</div>
<svg style="left:771.500px;top:129.600px" width="4" height="4" viewBox="0 0 4 4"><circle cx="1.600" cy="1.600" r="1.100" fill="none" stroke="#aaa" stroke-width=".6"/><path d="M2.400 2.400l1.200 1.200" stroke="#aaa" stroke-width=".6"/></svg>
<div class="a" style="left:776.700px;top:128.500px;width:18.800px;height:6.700px;background:#232323"></div>
<div class="t b" style="left:778.100px;top:130.300px;font-size:4px">EBEBEB</div>
<div class="t" style="left:698px;top:139.300px;font-size:3.900px;color:#a0a0a0">不透明度</div>
<div class="a" style="left:709.200px;top:147.700px;width:55px;height:3.500px;border-radius:1.750px;background:linear-gradient(90deg,#e4e4e4,#c4c4c4 30%,#686868 70%,#2c2c2c);box-shadow:0 0 0 .5px #2a2a2a"></div>
<div class="a" style="left:700.200px;top:146px;width:5.300px;height:5.300px;border-radius:50%;background:#f4f4f4"></div>
<div class="a" style="left:762.600px;top:146.600px;width:5px;height:5px;border-radius:50%;background:#222;border:.8px solid #f0f0f0"></div>
<div class="a" style="left:771.500px;top:145px;width:15.800px;height:6.800px;background:#232323"></div>
<div class="t b" style="left:773px;top:146.500px;font-size:5.400px;transform-origin:0 0;transform:scaleX(.86)">100 %</div>
<div class="a" style="left:789px;top:145px;width:6.500px;height:6.800px;background:#4b4b4b"></div>
<svg style="left:790.600px;top:147.400px" width="3.400" height="2.200" viewBox="0 0 3.400 2.200"><path d="M.3.300l1.400 1.400L3.100.300" fill="none" stroke="#bbb" stroke-width=".6"/></svg>

<div class="a" style="left:690.800px;top:155.400px;width:109.200px;height:12.300px;background:#242424"></div>
<div class="a" style="left:694.700px;top:158px;width:.7px;height:7px;background:#2f3a36"></div>
<div class="a" style="left:700px;top:158.500px;width:11.200px;height:6.400px;border-radius:.6px;background:#56625c"></div>
<div class="t b" style="left:700.700px;top:159.700px;font-size:4.900px;color:#e6f2ea">图层</div>
<div class="t" style="left:714px;top:159.700px;font-size:4.600px;color:#c4c4c4">调整画笔</div>
<div class="t" style="left:737px;top:159.700px;font-size:4.600px;color:#c4c4c4">快速特效</div>
<div class="t" style="left:759.300px;top:159.700px;font-size:4.600px;color:#c4c4c4">样式</div>
<svg style="left:793.200px;top:158.400px" width="6.600" height="6.800" viewBox="0 0 6.600 6.800"><rect x=".4" y=".4" width="5.800" height="6" rx="1.200" fill="#2c2c2c" stroke="#8c8c8c" stroke-width=".7"/><path d="M1.900 2.700l1.400 1.500 1.400-1.500" fill="none" stroke="#f0f0f0" stroke-width=".8"/></svg>
<div class="a" style="left:690.800px;top:167.700px;width:109.200px;height:12.800px;background:#383838"></div>
<div class="t" style="left:696.300px;top:173.300px;font-size:4.300px;color:#9c9c9c">不透明度:</div>
<div class="a" style="left:716.300px;top:171px;width:23.300px;height:7.500px;background:#222"></div>
<div class="t b" style="left:719px;top:172.800px;font-size:5.400px;transform-origin:0 0;transform:scaleX(.86)">100 %</div>
<svg style="left:734.400px;top:173.800px" width="3.400" height="2.200" viewBox="0 0 3.400 2.200"><path d="M.3.300l1.400 1.400L3.100.300" fill="none" stroke="#bbb" stroke-width=".6"/></svg>
<div class="a" style="left:742.900px;top:171.300px;width:37.700px;height:7.200px;background:#4c4c4c"></div>
<div class="t b" style="left:744.200px;top:173.100px;font-size:4.500px">正常</div>
<svg style="left:776px;top:173.800px" width="3.400" height="2.200" viewBox="0 0 3.400 2.200"><path d="M.3.300l1.400 1.400L3.100.300" fill="none" stroke="#ccc" stroke-width=".6"/></svg>
<svg style="left:783.700px;top:172.800px" width="4.400" height="4.400" viewBox="0 0 5 5"><circle cx="2.500" cy="2.500" r="1.400" fill="none" stroke="#cfcfcf" stroke-width="1.200"/><circle cx="2.500" cy="2.500" r="2.200" fill="none" stroke="#cfcfcf" stroke-width=".6" stroke-dasharray=".8 .6"/></svg>
<svg style="left:793px;top:171.800px" width="4.400" height="6" viewBox="0 0 4.400 6"><rect x=".3" y="2.600" width="3.800" height="3.200" rx=".5" fill="#f0f0f0"/><path d="M1.100 2.600V1.700a1.100 1.100 0 0 1 2.200 0v.9" fill="none" stroke="#f0f0f0" stroke-width=".7"/></svg>
<div class="a" style="left:690.800px;top:182.300px;width:109.200px;height:13.900px;background:#2b2b2b"></div>
<div class="a" style="left:711.800px;top:182.300px;width:88.200px;height:13.900px;background:linear-gradient(90deg,#6a2227,#5c1a1e)"></div>
<svg style="left:692.600px;top:185.200px" width="4.600" height="8" viewBox="0 0 4.600 8"><g fill="#9a9a9a"><rect x=".2" y=".2" width="1.500" height="1.500"/><rect x="2.700" y=".2" width="1.500" height="1.500"/><rect x=".2" y="2.600" width="1.500" height="1.500"/><rect x="2.700" y="2.600" width="1.500" height="1.500"/></g><path d="M.5 5.800l1.800 1.700 1.800-1.700" fill="none" stroke="#777" stroke-width=".6"/></svg>
<div class="a" style="left:699.400px;top:187px;width:9.200px;height:4.200px;background:#f2f2f2"></div>
<div class="t b" style="left:713.600px;top:187.300px;font-size:5.100px">画板1</div>
<div class="a" style="left:690.800px;top:196.200px;width:109.200px;height:27.500px;background:#2a2a2a"></div>
<div class="a" style="left:692.100px;top:196.200px;width:1.600px;height:27.300px;background:#454545"></div>
<div class="a" style="left:694.200px;top:196.200px;width:105.800px;height:14px;background:#8b0709"></div>
<svg style="left:695.800px;top:200.400px" width="4.400" height="5.600" viewBox="0 0 4.400 5.600"><path d="M.3 1.600h3.400M2.500.400l1.300 1.200-1.300 1.200M4.100 4h-3.400M1.900 2.800L.6 4l1.300 1.200" fill="none" stroke="#f0a8a8" stroke-width=".7"/></svg>
<div class="a" style="left:700.800px;top:196.200px;width:.6px;height:27.500px;background:rgba(0,0,0,.35)"></div>
<div class="a" style="left:715.500px;top:196.200px;width:.6px;height:27.500px;background:rgba(0,0,0,.35)"></div>
<div class="a" style="left:701.400px;top:196.200px;width:14.100px;height:14px;background:#3c0608"></div>
<div class="a" style="left:701.900px;top:199.800px;width:13px;height:6.400px;background:#f0f0f0"></div>
<div class="t" style="left:716.800px;top:201.200px;font-size:4.900px;color:#ee6668">矩形</div>
<div class="a" style="left:694.200px;top:210.200px;width:105.800px;height:13.500px;background:#2f3435"></div>
<div class="a" style="left:700.800px;top:210.200px;width:.6px;height:13.500px;background:#232323"></div>
<div class="a" style="left:715.500px;top:210.200px;width:.6px;height:13.500px;background:#232323"></div>
<div class="a" style="left:701.400px;top:210.200px;width:14.100px;height:13.500px;background:#2b2d2d"></div>
<svg style="left:696.200px;top:214.400px" width="3" height="5.400" viewBox="0 0 3 5.400"><path d="M2.700.400H.4v4.600h2.300M.4 2.700h1.600" fill="none" stroke="#8a8a8a" stroke-width=".7"/></svg>
<div class="t" style="left:716.800px;top:215px;font-size:4.900px;color:#8c8c8c">曲线</div>
<div class="a" style="left:787px;top:182.300px;width:.7px;height:41.400px;background:rgba(0,0,0,.4)"></div>
<div class="a" style="left:690.800px;top:223.700px;width:109.200px;height:108px;background:#252525"></div>
<svg style="left:791.600px;top:187.1px" width="6.200" height="4.400" viewBox="0 0 6.200 4.400"><path d="M.2 2.200C1.200.700 2.100.200 3.100.200s1.900.5 2.900 2c-1 1.500-1.900 2-2.900 2S1.200 3.700.2 2.200z" fill="#f0f0f0"/><circle cx="3.100" cy="2.200" r="1.100" fill="#333"/><circle cx="3.100" cy="2.200" r=".45" fill="#f0f0f0"/></svg>
<svg style="left:791.600px;top:200.6px" width="6.200" height="4.400" viewBox="0 0 6.200 4.400"><path d="M.2 2.200C1.200.700 2.100.200 3.100.200s1.900.5 2.900 2c-1 1.500-1.900 2-2.900 2S1.200 3.700.2 2.200z" fill="#f0f0f0"/><circle cx="3.100" cy="2.200" r="1.100" fill="#333"/><circle cx="3.100" cy="2.200" r=".45" fill="#f0f0f0"/></svg>
<svg style="left:791.600px;top:214.8px" width="6.200" height="4.400" viewBox="0 0 6.200 4.400"><path d="M.2 2.200C1.200.700 2.100.200 3.100.200s1.900.5 2.900 2c-1 1.500-1.900 2-2.900 2S1.200 3.700.2 2.200z" fill="#f0f0f0"/><circle cx="3.100" cy="2.200" r="1.100" fill="#333"/><circle cx="3.100" cy="2.200" r=".45" fill="#f0f0f0"/></svg>

<div class="a" style="left:690.800px;top:331.700px;width:109.200px;height:12.600px;background:#303030"></div>
<svg style="left:694px;top:334px" width="7.200" height="7.200" viewBox="0 0 7.200 7.200"><path d="M4 .800H.5v5.900h5.900V3.400" fill="none" stroke="#d0d0d0" stroke-width=".8"/><path d="M2.600 4.600l.4-1.300L6 .400l.9.900-2.900 2.900z" fill="#d0d0d0"/></svg>
<svg style="left:718.200px;top:334.200px" width="33" height="7" viewBox="0 0 33 7"><rect x=".3" y=".3" width="6.400" height="6.400" rx=".8" fill="#e6e6e6"/><rect x="8.400" y=".3" width="6.400" height="6.400" rx=".8" fill="#e6e6e6"/><circle cx="11.600" cy="3.500" r="2" fill="#303030"/><path d="M17.800.400h5v1.200l-1.700 1.900 1.700 1.900v1.200h-5V5.400l1.700-1.900-1.700-1.900z" fill="#e6e6e6"/><circle cx="28.500" cy="3.500" r="3.100" fill="none" stroke="#e6e6e6" stroke-width=".8"/><path d="M28.500.400a3.100 3.100 0 0 1 2.200 5.300z" fill="#e6e6e6"/><path d="M26.300 5.700l4.400-4.400" stroke="#e6e6e6" stroke-width=".6"/></svg>
<div class="t b" style="left:719.700px;top:335.600px;font-size:4.400px;color:#2c2c2c">fx</div>
<svg style="left:766px;top:334.200px" width="32" height="7" viewBox="0 0 32 7"><rect x=".4" y=".4" width="6.200" height="6.200" rx=".8" fill="none" stroke="#d6d6d6" stroke-width=".8"/><rect x="1.300" y="1.300" width="3" height="3" fill="#d6d6d6"/><circle cx="4.400" cy="4.400" r="1.600" fill="#d6d6d6"/><path d="M8.500 1.200h2.300l.7.900h3.300v4.400H8.500z" fill="none" stroke="#bdbdbd" stroke-width=".8"/><g fill="#cfcfcf"><rect x="16.900" y=".4" width="1.500" height="1.500"/><rect x="19.400" y=".4" width="1.500" height="1.500"/><rect x="21.900" y=".4" width="1.500" height="1.500"/><rect x="16.900" y="2.800" width="1.500" height="1.500"/><rect x="19.400" y="2.800" width="1.500" height="1.500"/><rect x="21.900" y="2.800" width="1.500" height="1.500"/><rect x="16.900" y="5.200" width="1.500" height="1.500"/><rect x="19.400" y="5.200" width="1.500" height="1.500"/><rect x="21.900" y="5.200" width="1.500" height="1.500"/></g><path d="M26.200 1.600h4.600M27.600 1.600V.600h1.800v1M26.700 1.800l.3 4.800h3l.3-4.800" fill="none" stroke="#777" stroke-width=".8"/><path d="M27.900 2.800v2.800M29.100 2.800v2.800" stroke="#777" stroke-width=".5"/></svg>
<div class="a" style="left:690.800px;top:344.300px;width:109.200px;height:12.700px;background:#232323"></div>
<div class="a" style="left:694.700px;top:347px;width:.7px;height:7.500px;background:#363636"></div>
<div class="a" style="left:699px;top:346.800px;width:12.900px;height:8.400px;border-radius:.8px;background:#3c3c3c"></div>
<div class="t b" style="left:700.500px;top:348.900px;font-size:4.800px">变换</div>
<div class="t" style="left:713.800px;top:348.900px;font-size:4.700px;color:#c4c4c4">导航器</div>
<div class="t" style="left:731.800px;top:348.900px;font-size:4.600px;color:#c4c4c4">历史记录</div>
<svg style="left:792.600px;top:347.400px" width="6.800" height="6.800" viewBox="0 0 6.800 6.800"><rect x=".4" y=".4" width="6" height="6" rx="1.200" fill="#2c2c2c" stroke="#8c8c8c" stroke-width=".7"/><path d="M2 2.700l1.400 1.500 1.400-1.500" fill="none" stroke="#f0f0f0" stroke-width=".8"/></svg>
<div class="a" style="left:690.800px;top:357px;width:109.200px;height:50px;background:#383838"></div>
<svg style="left:697.200px;top:370.600px" width="17" height="17" viewBox="0 0 17 17"><rect x="1.800" y="1.800" width="13.400" height="13.400" fill="#6e6e6e"/><g fill="#e4e4e4"><rect x="0" y="0" width="3.800" height="3.800" fill="#fff"/><circle cx="8.500" cy="1.900" r="1.200"/><circle cx="15" cy="1.900" r="1.200"/><circle cx="1.900" cy="8.500" r="1.200"/><circle cx="8.500" cy="8.500" r="1.200"/><circle cx="15" cy="8.500" r="1.200"/><circle cx="1.900" cy="15" r="1.200"/><circle cx="8.500" cy="15" r="1.200"/><circle cx="15" cy="15" r="1.200"/></g></svg>
<div class="t" style="left:719.8px;top:365.500px;font-size:4.600px;color:#9c9c9c">X:</div>
<div class="a" style="left:726px;top:363.2px;width:26px;height:7px;background:#222"></div>
<div class="t b" style="left:728px;top:365.1px;font-size:5px">19.1 mm</div>
<div class="t" style="left:719.8px;top:375.800px;font-size:4.600px;color:#9c9c9c">Y:</div>
<div class="a" style="left:726px;top:373.5px;width:26px;height:7px;background:#222"></div>
<div class="t b" style="left:728px;top:375.4px;font-size:5px">31.7 mm</div>
<div class="t" style="left:719.8px;top:388px;font-size:4.600px;color:#9c9c9c">R:</div>
<div class="a" style="left:726px;top:385.7px;width:26px;height:7px;background:#222"></div>
<div class="t b" style="left:728px;top:387.6px;font-size:5px">0 °</div>
<svg style="left:747.6px;top:388.3px" width="3.400" height="2.200" viewBox="0 0 3.400 2.200"><path d="M.3.300l1.400 1.400L3.100.300" fill="none" stroke="#bbb" stroke-width=".6"/></svg>
<div class="t" style="left:757px;top:365.500px;font-size:4.600px;color:#9c9c9c">W:</div>
<div class="a" style="left:764.4px;top:363.2px;width:27.3px;height:7px;background:#222"></div>
<div class="t b" style="left:766.4px;top:365.1px;font-size:5px">142.5 mm</div>
<div class="t" style="left:758px;top:375.800px;font-size:4.600px;color:#9c9c9c">H:</div>
<div class="a" style="left:764.4px;top:373.5px;width:27.3px;height:7px;background:#222"></div>
<div class="t b" style="left:766.4px;top:375.4px;font-size:5px">67.7 mm</div>
<div class="t" style="left:758px;top:388px;font-size:4.600px;color:#9c9c9c">S:</div>
<div class="a" style="left:764.4px;top:385.7px;width:27.3px;height:7px;background:#222"></div>
<div class="t b" style="left:766.4px;top:387.6px;font-size:5px">0 °</div>
<svg style="left:787.3px;top:388.3px" width="3.400" height="2.200" viewBox="0 0 3.400 2.200"><path d="M.3.300l1.400 1.400L3.100.300" fill="none" stroke="#bbb" stroke-width=".6"/></svg>
<svg style="left:796px;top:367.600px" width="3" height="8" viewBox="0 0 3 8"><path d="M2.600.400H.5v2.600M.5 5v2.600h2.100" fill="none" stroke="#8a8a8a" stroke-width=".7"/></svg>
<svg style="left:777px;top:400px" width="16" height="7" viewBox="0 0 16 7"><rect x=".4" y=".4" width="5.600" height="6.600" fill="#4a4a4a"/><rect x="1.400" y="3.400" width="2.400" height="3.600" fill="#777"/><path d="M10.400 2.400l1.500 1.500 1.500-1.500" fill="none" stroke="#bbb" stroke-width=".7"/></svg>

</body>
</html>
